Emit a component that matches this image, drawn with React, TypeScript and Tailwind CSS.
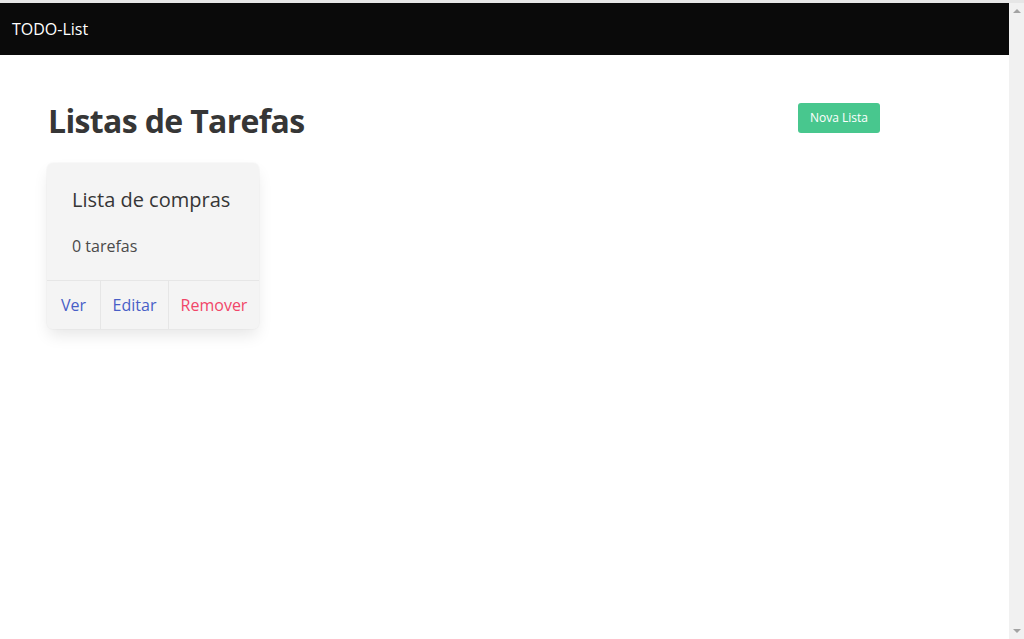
import { Fragment } from "react";

const TodoApp = () => {
  return (
    <Fragment>
      <div className="flex flex-col h-[639px] w-[1024px] overflow-hidden bg-white">
        <div className="h-[3px] w-full bg-[#e6e6e6] shrink-0" />
        <div className="flex flex-row flex-1 min-h-0">
          <div className="flex flex-col flex-1 min-w-0">
            <nav className="flex flex-row items-center h-[52px] bg-[#0a0a0a] px-3 shrink-0">
              <span className="text-white text-[16px] font-['Open_Sans',sans-serif]">TODO-List</span>
            </nav>
            <section className={sectionCls}>
              <div className="flex flex-row justify-between items-start w-[832px]">
                <h1 className="text-[32px] leading-[36px] font-bold text-[#363636] tracking-[-0.65px]">
                  Listas de Tarefas
                </h1>
                <button className="h-[30px] px-[12px] rounded-[3px] bg-[#48c78e] text-white text-[12px] leading-none">
                  Nova Lista
                </button>
              </div>
              <div className="flex flex-row mt-6">
                <ListCard title="Lista de compras" count={0} />
              </div>
            </section>
          </div>
          <div className="flex flex-col justify-between items-center w-[15px] bg-[#f1f1f1] py-[6px] shrink-0">
            <div className="w-0 h-0 border-l-[4px] border-r-[4px] border-b-[4px] border-l-transparent border-r-transparent border-b-[#a3a3a3]" />
            <div className="w-0 h-0 border-l-[4px] border-r-[4px] border-t-[4px] border-l-transparent border-r-transparent border-t-[#a3a3a3]" />
          </div>
        </div>
      </div>
    </Fragment>
  );
};

const ListCard = ({ title, count }: { title: string; count: number }) => {
  return (
    <div className="flex flex-col w-[212px] bg-[#f4f4f4] rounded-[6px] shadow-[0_8px_16px_-2px_rgba(10,10,10,0.1),0_0_0_1px_rgba(10,10,10,0.02)] -ml-px">
      <div className="flex flex-col pl-[25px] pr-6 pt-6 pb-[22px] gap-[22px]">
        <p className="text-[20px] leading-[25px] text-[#363636]">{title}</p>
        <p className="text-[16px] leading-[24px] text-[#4a4a4a]">{count} tarefas</p>
      </div>
      <div className="flex flex-row border-t border-[#e6e6e6] h-[49px]">
        <a className={clsxItem("w-[53px] text-[#485fc7]")}>Ver</a>
        <a className={clsxItem("w-[68px] text-[#485fc7] border-l border-[#e6e6e6]")}>Editar</a>
        <a className={clsxItem("flex-1 text-[#f14668] border-l border-[#e6e6e6]")}>Remover</a>
      </div>
    </div>
  );
};

function clsxItem(extra: string) {
  return "flex items-center justify-center text-[16px] cursor-pointer " + extra;
}

// Tailwind CSS constants
const sectionCls = "flex flex-col pt-12 pl-12 font-['Open_Sans',sans-serif]";

export default TodoApp;
